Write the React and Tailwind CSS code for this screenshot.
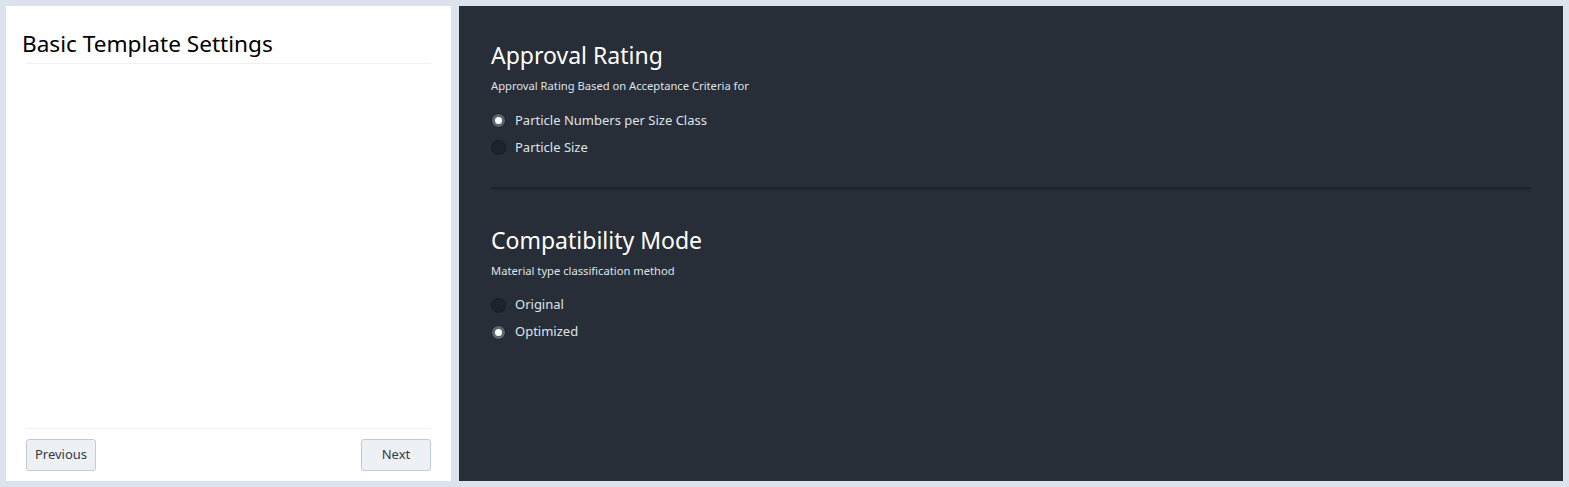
import React, { useState } from 'react'

const font = { fontFamily: '"Noto Sans", "Open Sans", sans-serif' }

const Radio = ({ checked, label, onSelect }) => (
  <label className="flex items-center gap-[9px] h-[27px] cursor-pointer" onClick={onSelect}>
    <span
      className={
        'w-[15px] h-[15px] rounded-full border flex items-center justify-center ' +
        (checked ? 'bg-[#5d6571] border-[#1b2026]' : 'bg-[#1e232a] border-[#181c21]')
      }
    >
      {checked && <span className="w-[7px] h-[7px] rounded-full bg-white" />}
    </span>
    <span className="text-[13px] text-[#dfe3e8]">{label}</span>
  </label>
)

const Section = ({ title, subtitle, options, value, onChange }) => (
  <div>
    <h2 className="text-[23px] leading-[30px] text-white">{title}</h2>
    <p className="mt-[8px] text-[11.2px] text-[#dfe3e8]">{subtitle}</p>
    <div className="mt-[12px]">
      {options.map((o, i) => (
        <Radio key={o} label={o} checked={value === i} onSelect={() => onChange(i)} />
      ))}
    </div>
  </div>
)

export default function App() {
  const [rating, setRating] = useState(0)
  const [mode, setMode] = useState(1)

  return (
    <div className="h-[487px] bg-[#dde3ec] p-[6px] flex gap-[8px]" style={font}>
      {/* Left wizard panel */}
      <div className="w-[445px] bg-white flex flex-col">
        <div className="px-[16px] pt-[23px]">
          <h1 className="text-[22.6px] leading-[30px] text-black">Basic Template Settings</h1>
        </div>
        <div className="mx-[20px] mt-[4px] border-t border-[#eef0f3]" />
        <div className="flex-1" />
        <div className="mx-[20px] border-t border-[#eef0f3]" />
        <div className="flex justify-between px-[20px] pt-[10px] pb-[10px]">
          <button className="h-[32px] w-[70px] rounded-[3px] border border-[#c2cad6] bg-[#edf1f6] text-[13px] text-[#333a44]">
            Previous
          </button>
          <button className="h-[32px] w-[70px] rounded-[3px] border border-[#c2cad6] bg-[#edf1f6] text-[13px] text-[#333a44]">
            Next
          </button>
        </div>
      </div>

      {/* Right settings panel */}
      <div className="flex-1 bg-[#272e37] px-[32px] pt-[34px]">
        <Section
          title="Approval Rating"
          subtitle="Approval Rating Based on Acceptance Criteria for"
          options={['Particle Numbers per Size Class', 'Particle Size']}
          value={rating}
          onChange={setRating}
        />
        <div className="mt-[26px] mb-[35px] h-[3px] bg-[#1f242b] rounded" />
        <Section
          title="Compatibility Mode"
          subtitle="Material type classification method"
          options={['Original', 'Optimized']}
          value={mode}
          onChange={setMode}
        />
      </div>
    </div>
  )
}
